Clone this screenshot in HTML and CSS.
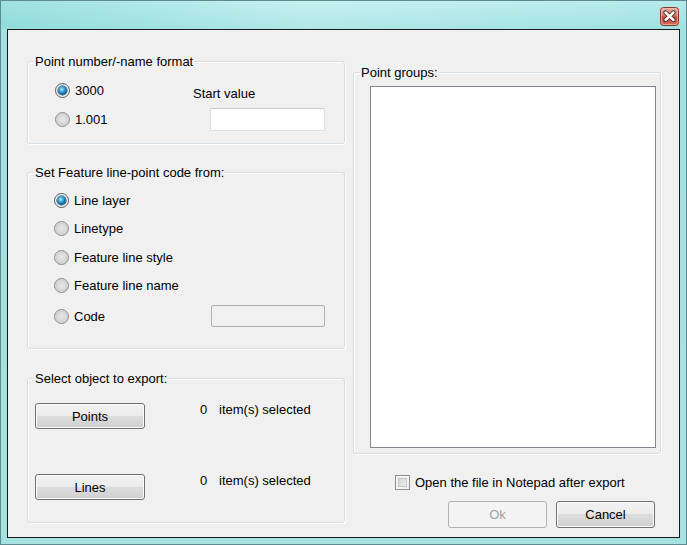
FILE: index.html
```html
<!DOCTYPE html>
<html>
<head>
<meta charset="utf-8">
<link rel="stylesheet" href="styles.css">
</head>
<body>
<div class="window">
  <div class="titlebar">
    <button class="close" aria-label="Close">
      <svg width="19" height="19" viewBox="0 0 19 19">
        <defs>
          <linearGradient id="cg" x1="0" y1="0" x2="0" y2="1">
            <stop offset="0" stop-color="#eab0a2"/>
            <stop offset="0.45" stop-color="#d7735f"/>
            <stop offset="0.55" stop-color="#c7432c"/>
            <stop offset="1" stop-color="#d9705a"/>
          </linearGradient>
        </defs>
        <rect x="0.5" y="0.5" width="18" height="18" rx="3" fill="url(#cg)" stroke="#7f3a2e"/>
        <rect x="1.5" y="1.5" width="16" height="16" rx="2" fill="none" stroke="#f0c4b8" stroke-opacity="0.6"/>
        <path d="M5.5 5.5 L13.5 13 M13.5 5.5 L5.5 13" stroke="#4a2030" stroke-width="4.2" stroke-linecap="round"/>
        <path d="M5.5 5.5 L13.5 13 M13.5 5.5 L5.5 13" stroke="#ffffff" stroke-width="2.4" stroke-linecap="round"/>
      </svg>
    </button>
  </div>
  <div class="client">
    <div class="col-left">
      <div class="group g1">
        <span class="caption">Point number/-name format</span>
        <div class="g1-radios">
          <label class="opt"><span class="radio on"></span>3000</label>
          <label class="opt"><span class="radio"></span>1.001</label>
        </div>
        <div class="g1-start">
          <span class="start-label">Start value</span>
          <span class="textbox"></span>
        </div>
      </div>

      <div class="group g2">
        <span class="caption">Set Feature line-point code from:</span>
        <label class="opt"><span class="radio on"></span>Line layer</label>
        <label class="opt"><span class="radio"></span>Linetype</label>
        <label class="opt"><span class="radio"></span>Feature line style</label>
        <label class="opt"><span class="radio"></span>Feature line name</label>
        <div class="opt code-row">
          <label class="opt"><span class="radio"></span>Code</label>
          <span class="textbox disabled"></span>
        </div>
      </div>

      <div class="group g3">
        <span class="caption">Select object to export:</span>
        <div class="export-row">
          <button class="btn wide">Points</button>
          <span class="count">0</span>
          <span class="sel">item(s) selected</span>
        </div>
        <div class="export-row second">
          <button class="btn wide">Lines</button>
          <span class="count">0</span>
          <span class="sel">item(s) selected</span>
        </div>
      </div>
    </div>

    <div class="col-right">
      <div class="group g4">
        <span class="caption">Point groups:</span>
        <div class="listbox"></div>
      </div>
      <label class="check-row"><span class="checkbox"></span>Open the file in Notepad after export</label>
      <div class="buttons">
        <button class="btn action disabled">Ok</button>
        <button class="btn action">Cancel</button>
      </div>
    </div>
  </div>
</div>
</body>
</html>
```

FILE: styles.css
```css
* { box-sizing: border-box; }

html, body {
  margin: 0;
  padding: 0;
  background: #a9e2e2;
}

body {
  font-family: "Liberation Sans", Arial, sans-serif;
  font-size: 13px;
  color: #000;
}

.window {
  width: 687px;
  height: 545px;
  border: 1px solid #5f8c90;
  background: linear-gradient(to bottom, #c4efef 0px, #a2e2e2 28px, #a6e2e2 100%);
  display: flex;
  flex-direction: column;
}

.titlebar {
  height: 28px;
  flex: none;
  display: flex;
  justify-content: flex-end;
  padding: 6px 7px 0 0;
  background: linear-gradient(to right, rgba(130, 214, 214, 0.55), rgba(210, 245, 245, 0.3) 45%, rgba(150, 222, 222, 0.3));
}

.close {
  width: 19px;
  height: 19px;
  padding: 0;
  margin: 0;
  border: 0;
  background: none;
  display: block;
}
.close svg { display: block; }

.client {
  flex: 1;
  margin: 0 6px 6px 6px;
  border: 1px solid #1a1a1a;
  background: #f0f0f0;
  display: flex;
  gap: 8px;
  padding: 31px 0 0 19px;
}

.col-left {
  width: 318px;
  display: flex;
  flex-direction: column;
}

.col-right {
  width: 308px;
  padding-top: 11px;
  display: flex;
  flex-direction: column;
}

.group {
  position: relative;
  border: 1px solid #d5dfe5;
  border-radius: 3px;
  box-shadow: inset 1px 1px 0 #fff, 1px 1px 0 #fff;
}

.caption {
  position: absolute;
  top: -8px;
  left: 6px;
  padding: 0 1px;
  line-height: 15px;
  background: #f0f0f0;
  white-space: nowrap;
}

/* group 1 */
.g1 {
  height: 83px;
  display: flex;
}
.g1-radios {
  width: 165px;
  padding: 18px 0 0 27px;
  display: flex;
  flex-direction: column;
  gap: 9px;
}
.g1-start {
  padding-top: 24px;
  display: flex;
  flex-direction: column;
}
.start-label {
  line-height: 16px;
  height: 16px;
}
.g1-start .textbox {
  margin: 6px 0 0 17px;
}

.opt {
  display: flex;
  align-items: center;
  height: 20px;
  gap: 5px;
  white-space: nowrap;
}

.radio {
  position: relative;
  flex: none;
  width: 15px;
  height: 15px;
  border-radius: 50%;
  border: 1px solid #8a8a8a;
  background: radial-gradient(circle at 50% 50%, #e6e6e6 0, #dadada 45%, #cfcfcf 60%, #f4f4f4 85%, #ffffff 100%);
}
.radio.on {
  border-color: #5a5a5a;
  background: radial-gradient(circle at 50% 50%, #e0e0e0 0, #f6f6f6 80%, #ffffff 100%);
}
.radio.on::after {
  content: "";
  position: absolute;
  left: 2px;
  top: 2px;
  width: 9px;
  height: 9px;
  border-radius: 50%;
  background: radial-gradient(circle at 42% 38%, #c4f0ff 0, #4fb3e2 25%, #1673ad 55%, #0c4e7c 80%, #083556 100%);
  box-shadow: 0 0 0 0.5px #0a3350;
}

.textbox {
  display: block;
  width: 115px;
  height: 23px;
  background: #fff;
  border: 1px solid #dadde2;
  border-top-color: #c6cace;
  border-radius: 2px;
}
.textbox.disabled {
  width: 114px;
  height: 22px;
  background: #f0f0f0;
  border: 1px solid #adb2b5;
}

/* group 2 */
.g2 {
  margin-top: 28px;
  height: 177px;
  padding: 17px 0 0 26px;
  display: flex;
  flex-direction: column;
  gap: 8.5px;
}
.g2 .code-row {
  height: 22px;
  margin-top: 1px;
  justify-content: space-between;
  padding-right: 19px;
}

/* group 3 */
.g3 {
  margin-top: 29px;
  height: 145px;
  padding: 24px 0 0 7px;
}
.export-row {
  display: flex;
  align-items: flex-start;
}
.export-row.second {
  margin-top: 45px;
}
.count {
  margin-left: 55px;
  line-height: 14px;
  width: 19px;
}
.sel {
  line-height: 14px;
}

.btn {
  font-family: "Liberation Sans", Arial, sans-serif;
  font-size: 13px;
  color: #000;
  height: 26px;
  padding: 0;
  margin: 0;
  border: 1px solid #707070;
  border-radius: 3px;
  background: linear-gradient(to bottom, #f2f2f2 0%, #ebebeb 50%, #dddddd 50%, #cfcfcf 100%);
  box-shadow: inset 0 0 0 1px #fcfcfc;
}
.btn.wide {
  width: 110px;
}
.btn.action {
  width: 99px;
  height: 27px;
}
.btn.disabled {
  color: #a0a0a0;
  border-color: #adb2b5;
  background: #f4f4f4;
  box-shadow: none;
}

/* right column */
.g4 {
  height: 382px;
  padding: 13px 0 0 16px;
}
.listbox {
  width: 286px;
  height: 362px;
  background: #fff;
  border: 1px solid #828790;
}

.check-row {
  margin: 20px 0 0 42px;
  display: flex;
  align-items: center;
  gap: 5px;
  height: 16px;
  white-space: nowrap;
}
.checkbox {
  flex: none;
  width: 15px;
  height: 15px;
  border: 1px solid #8e8f8f;
  background: linear-gradient(135deg, #d0d0d0, #f4f4f4);
  box-shadow: inset 0 0 0 2px #f4f4f4, inset 0 0 0 3px #c4c4c4;
}

.buttons {
  margin: 11px 0 0 95px;
  display: flex;
  gap: 9px;
}
```
